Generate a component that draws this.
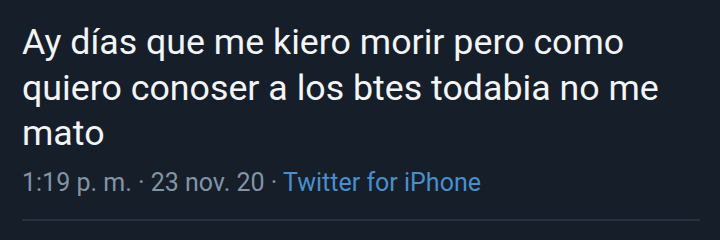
export default function App() {
  return (
    <div className="w-[720px] h-[240px] bg-[#161e2a] overflow-hidden font-['Roboto',sans-serif]">
      <div className="pl-[22px] pr-[20px] pt-[20px]">
        <p className="text-[35.75px] leading-[45.5px] text-[#f2f4f6]">
          Ay días que me kiero morir pero como quiero conoser a los btes todabia no me mato
        </p>
        <div className="mt-[11px] text-[25px] leading-[30px] text-[#8394a4]">
          1:19 p. m. · 23 nov. 20 · <span className="text-[#4a8fcb]">Twitter for iPhone</span>
        </div>
        <div className="mt-[21px] h-[2px] bg-[#273240]" />
      </div>
    </div>
  );
}
